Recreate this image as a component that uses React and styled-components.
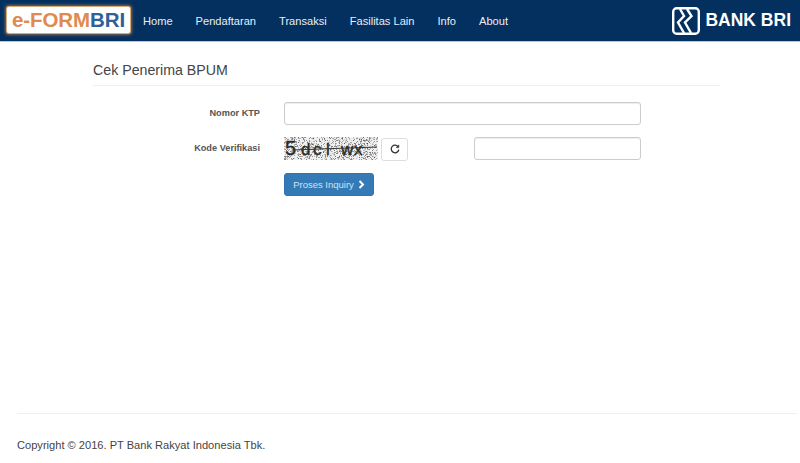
import React from 'react'
import styled, { createGlobalStyle } from 'styled-components'

const GlobalStyle = createGlobalStyle`
html, body {
  margin: 0;
  padding: 0;
  background: #fff;
  font-family: 'Liberation Sans', Arial, sans-serif;
  color: #333;
}
* { box-sizing: border-box; }
`

const Page = styled.div`
width: 800px;
height: 463px;
overflow: hidden;
display: flex;
flex-direction: column;
`

const Navbar = styled.header`
height: 42px;
flex: none;
display: flex;
align-items: center;
justify-content: space-between;
padding: 0 9px 0 7px;
background: #03305f;
border-bottom: 1px solid #a9cbe4;
`

const NavLeft = styled.div`
display: flex;
align-items: center;
`

const Brand = styled.div`
width: 123px;
height: 26px;
margin-bottom: 1px;
display: flex;
align-items: center;
justify-content: center;
background: #fff;
border-radius: 2px;
box-shadow: 0 0 0 1px #d9a878, 0 0 3px 2px #8a6a50;
font-weight: bold;
font-size: 20.5px;
letter-spacing: -0.1px;
white-space: nowrap;
`

const BrandPart = styled.span`
color: ${props => props.$color};
`

const Menu = styled.nav`
display: flex;
gap: 23px;
margin-left: 13px;
`

const MenuItem = styled.a`
color: #e8eef5;
font-size: 11.1px;
text-decoration: none;
`

const BriLogo = styled.div`
display: flex;
align-items: center;
gap: 5px;
color: #fff;
font-weight: bold;
font-size: 17.5px;
white-space: nowrap;
`

const Main = styled.main`
flex: 1;
width: 627px;
margin-left: 93px;
padding-top: 19px;
`

const Title = styled.h1`
margin: 0 0 16px;
padding-bottom: 6px;
font-size: 14.2px;
line-height: 18px;
font-weight: normal;
color: #444;
border-bottom: 1px solid #eee;
`

const Row = styled.div`
display: flex;
align-items: center;
height: 23px;
margin-bottom: ${props => props.$bottom || 12}px;
`

const Label = styled.label`
width: 167px;
flex: none;
text-align: right;
font-size: 9.2px;
font-weight: bold;
color: #555;
margin-right: 24px;
position: relative;
top: -1px;
`

const Input = styled.input`
width: ${props => props.$width}px;
height: 23px;
margin-left: ${props => props.$gap || 0}px;
padding: 0 8px;
border: 1px solid #ccc;
border-radius: 3px;
background: #fff;
box-shadow: inset 0 1px 1px rgba(0,0,0,.075);
outline: none;
`

const RefreshButton = styled.button`
width: 27px;
height: 23px;
margin: 1px 0 0 3px;
padding: 0;
display: flex;
align-items: center;
justify-content: center;
background: #fff;
border: 1px solid #ddd;
border-radius: 3px;
color: #333;
`

const SubmitButton = styled.button`
width: 90px;
height: 23px;
padding: 0;
display: flex;
align-items: center;
justify-content: center;
gap: 4px;
background: #337ab7;
border: 1px solid #3373ab;
border-radius: 3px;
color: #cfe3f3;
font-family: inherit;
font-size: 9.5px;
`

const Footer = styled.footer`
margin: 0 3px 0 17px;
height: 50px;
padding-top: 24px;
border-top: 1px solid #eee;
font-size: 11.1px;
line-height: 14px;
color: #444;
`

// pseudo random dots so the captcha looks the same on every render
const captchaDots = () => {
  let seed = 7
  const next = () => {
    seed = (seed * 16807) % 2147483647
    return seed / 2147483647
  }
  const dots = []
  for (let i = 0; i < 1000; i++) {
    dots.push({ x: Math.floor(next() * 94), y: Math.floor(next() * 23), o: 0.15 + next() * 0.5 })
  }
  return dots
}

const glyphs = [
  { c: '5', x: 1, y: 18, size: 20 },
  { c: 'd', x: 17, y: 18, size: 17 },
  { c: 'c', x: 29, y: 18, size: 17 },
  { c: 'l', x: 42, y: 18, size: 17 },
  { c: 'w', x: 57, y: 18, size: 17 },
  { c: 'x', x: 70, y: 18, size: 17 },
]

const Captcha = () => (
  <svg width="94" height="23" viewBox="0 0 94 23" style={{ flex: 'none' }}>
    <rect width="94" height="23" fill="#f0f0f0" />
    {captchaDots().map((d, i) => (
      <rect key={i} x={d.x} y={d.y} width="1" height="1" fill="#444" opacity={d.o} />
    ))}
    {glyphs.map(g => (
      <text key={g.c} x={g.x} y={g.y} fontFamily="Liberation Sans, sans-serif" fontSize={g.size} fill="#2b2b2b" stroke="#2b2b2b" strokeWidth="0.4">{g.c}</text>
    ))}
    <path d="M8 13 L93 10" stroke="#333" strokeWidth="1.2" />
  </svg>
)

const BriMark = () => (
  <svg width="28" height="28" viewBox="0 0 28 28" fill="none" stroke="#fff">
    <rect x="1.2" y="1.2" width="25.6" height="25.6" rx="3.5" strokeWidth="2.4" />
    <path d="M8 2 L12 9 L6 15.5 L12 26" strokeWidth="2.4" />
    <path d="M15 2 L19.5 9 L13 15.5 L19 26" strokeWidth="2.4" />
  </svg>
)

const RefreshIcon = () => (
  <svg width="10" height="10" viewBox="0 0 10 10" fill="none" stroke="#333" strokeWidth="1.3">
    <path d="M8.3 3 A3.8 3.8 0 1 0 8.8 5.6" />
    <path d="M8.8 0.8 L8.8 3.6 L6 3.6" fill="#333" strokeWidth="0.6" />
  </svg>
)

const ChevronIcon = () => (
  <svg width="7" height="9" viewBox="0 0 7 9" fill="none" stroke="#fff" strokeWidth="2">
    <path d="M1.5 1 L5 4.5 L1.5 8" />
  </svg>
)

const menu = ['Home', 'Pendaftaran', 'Transaksi', 'Fasilitas Lain', 'Info', 'About']

const App = () => {
  return (
    <Page>
      <GlobalStyle />
      <Navbar>
        <NavLeft>
          <Brand>
            <BrandPart $color="#e08a50">e-FORM</BrandPart>
            <BrandPart $color="#2f6098">BRI</BrandPart>
          </Brand>
          <Menu>
            {menu.map(item => <MenuItem key={item} href="#">{item}</MenuItem>)}
          </Menu>
        </NavLeft>
        <BriLogo>
          <BriMark />
          BANK BRI
        </BriLogo>
      </Navbar>
      <Main>
        <Title>Cek Penerima BPUM</Title>
        <Row>
          <Label>Nomor KTP</Label>
          <Input $width={357} />
        </Row>
        <Row $bottom={13}>
          <Label>Kode Verifikasi</Label>
          <Captcha />
          <RefreshButton><RefreshIcon /></RefreshButton>
          <Input $width={167} $gap={66} />
        </Row>
        <Row>
          <Label />
          <SubmitButton>Proses Inquiry <ChevronIcon /></SubmitButton>
        </Row>
      </Main>
      <Footer>Copyright © 2016. PT Bank Rakyat Indonesia Tbk.</Footer>
    </Page>
  )
}

export default App
